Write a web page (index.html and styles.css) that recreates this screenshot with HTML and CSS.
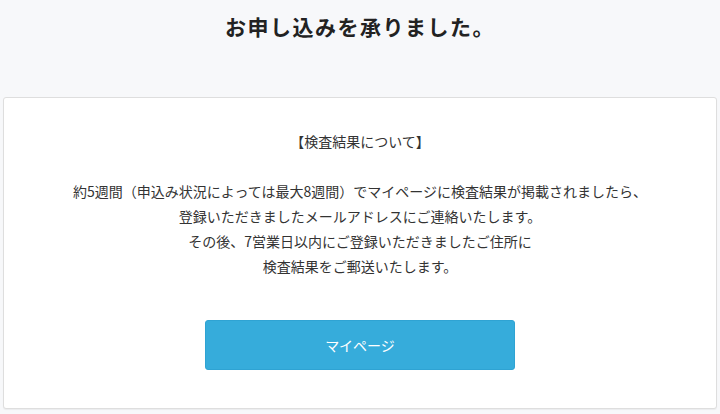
FILE: index.html
```html
<!DOCTYPE html>
<html lang="ja">
<head>
    <meta charset="UTF-8">
    <meta name="viewport" content="width=device-width, initial-scale=1.0">
    <title>お申し込みを承りました。</title>
    <link rel="stylesheet" href="styles.css">
</head>
<body>
    <!-- 見出し -->
    <h1 class="page-title">お申し込みを承りました。</h1>
    <!-- 完了メッセージ -->
    <div class="card">
        <p class="note">
            【検査結果について】<br>
            <br>
            約5週間（申込み状況によっては最大8週間）でマイページに検査結果が掲載されましたら、<br>
            登録いただきましたメールアドレスにご連絡いたします。<br>
            その後、7営業日以内にご登録いただきましたご住所に<br>
            検査結果をご郵送いたします。
        </p>
        <div class="actions">
            <a class="btn" href="#">マイページ</a>
        </div>
    </div>
</body>
</html>
```

FILE: styles.css
```css
html, body { height: 100%; }
body {
    margin: 0;
    background: #f7f8fa;
    color: #333;
    font-family: "Noto Sans CJK JP", "Noto Sans", sans-serif;
}
.page-title {
    margin: 0;
    padding-top: 11px;
    font-size: 21px;
    line-height: 30px;
    letter-spacing: 1.5px;
    font-weight: bold;
    text-align: center;
    color: #222;
}
.card {
    margin: 56px 3px 0;
    padding: 31px 10px 38px;
    background: #fff;
    border: 1px solid #dedede;
    border-radius: 3px;
    box-shadow: 0 1px 1px rgba(0, 0, 0, 0.05);
}
.note {
    margin: 0;
    font-size: 14px;
    line-height: 25px;
    text-align: center;
}
.actions { display: flex; justify-content: center; margin-top: 41px; }
.btn {
    display: flex;
    align-items: center;
    justify-content: center;
    width: 310px;
    height: 50px;
    box-sizing: border-box;
    color: #fff;
    background-color: #36acdb;
    border: 1px solid #2fa3d3;
    border-radius: 3px;
    font-size: 14px;
    text-decoration: none;
}
```
